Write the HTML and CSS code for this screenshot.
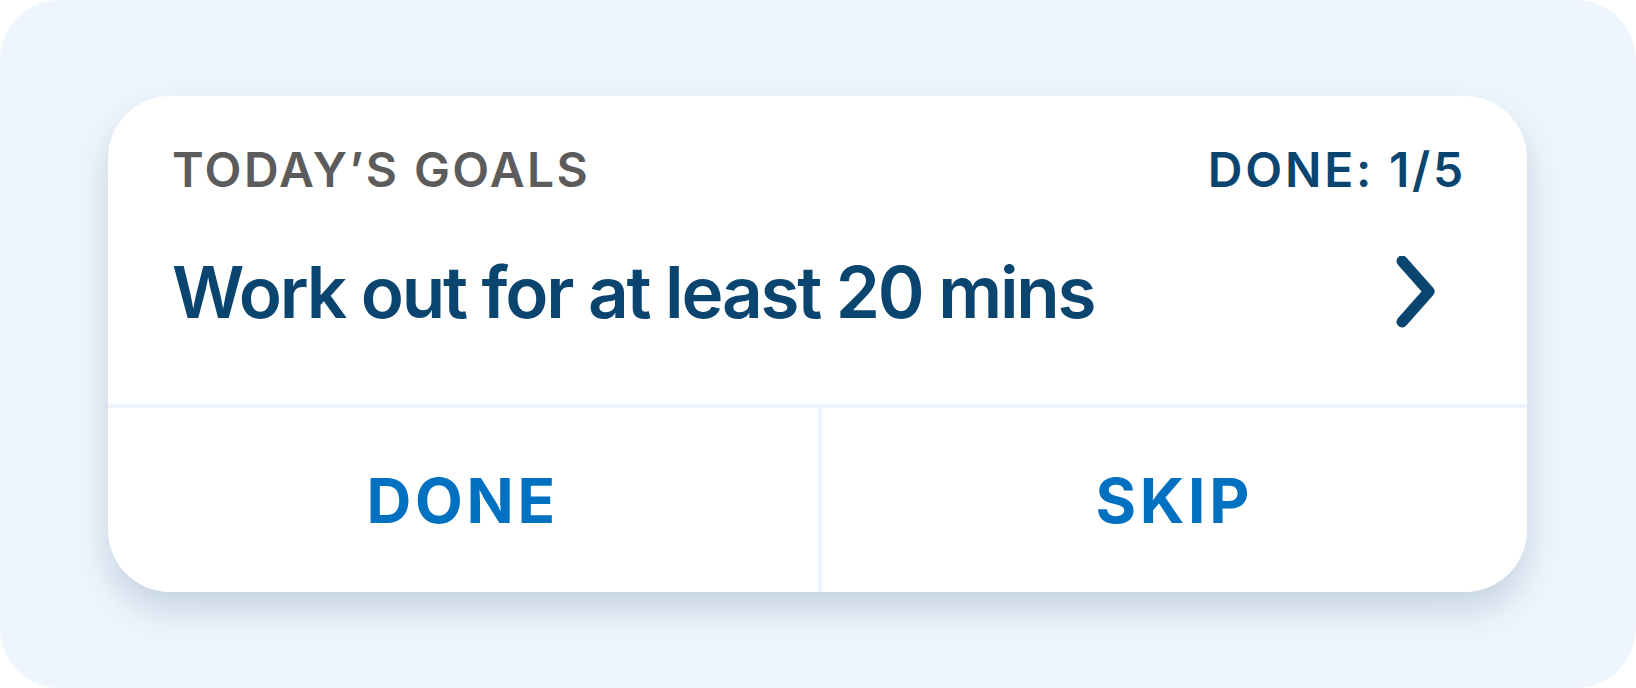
FILE: index.html
```html
<!DOCTYPE html>
<html lang="en">
<head>
<meta charset="utf-8">
<title>Today's Goals</title>
<link rel="stylesheet" href="styles.css">
</head>
<body>
<div class="frame">
  <div class="card">
    <div class="card-top">
      <div class="card-header">
        <span class="label">TODAY’S GOALS</span>
        <span class="count">DONE: 1/5</span>
      </div>
      <div class="goal-row">
        <span class="goal">Work out for at least 20 mins</span>
        <svg class="chevron" width="50" height="72" viewBox="0 0 50 72" aria-hidden="true">
          <path d="M12 5 L39 35.5 L12 66" fill="none" stroke="#0a4570" stroke-width="11" stroke-linecap="round" stroke-linejoin="round"/>
        </svg>
      </div>
    </div>
    <div class="actions">
      <button class="action action-done">DONE</button>
      <button class="action action-skip">SKIP</button>
    </div>
  </div>
</div>
</body>
</html>
```

FILE: styles.css
```css
* { box-sizing: border-box; }

html, body {
  margin: 0;
  padding: 0;
  background: #ffffff;
}

body {
  font-family: Inter, "Noto Sans", "Liberation Sans", sans-serif;
}

.frame {
  width: 1636px;
  height: 688px;
  background: #eef5fc;
  border-radius: 60px;
  padding: 96px 109px 96px 108px;
}

.card {
  height: 496px;
  background: #ffffff;
  border-radius: 62px;
  box-shadow: 0 18px 34px rgba(40, 80, 120, 0.2);
  display: flex;
  flex-direction: column;
  overflow: hidden;
}

.card-top {
  height: 312px;
  padding: 50px 64px 0 64px;
  border-bottom: 4px solid #eef3fa;
}

.card-header {
  display: flex;
  justify-content: space-between;
  align-items: center;
  height: 48px;
  line-height: 48px;
  font-size: 48px;
  font-weight: 600;
}

.label {
  color: #5c5c5c;
  letter-spacing: 0.05em;
}

.count {
  color: #0a4570;
  letter-spacing: 0.058em;
  margin-right: -3px;
}

.goal-row {
  display: flex;
  justify-content: space-between;
  align-items: center;
  height: 72px;
  margin-top: 62px;
}

.goal {
  color: #0a4570;
  font-size: 71px;
  line-height: 72px;
  font-weight: 600;
  letter-spacing: -0.031em;
}

.chevron {
  display: block;
  margin-right: 23px;
}

.actions {
  flex: 1;
  display: flex;
}

.action {
  border: 0;
  background: transparent;
  font-family: inherit;
  color: #0070c0;
  font-size: 62px;
  font-weight: 700;
  letter-spacing: 0.06em;
  padding: 0;
  cursor: pointer;
}

.action-done {
  flex: 0 0 50%;
}

.action-skip {
  flex: 1;
  border-left: 4px solid #eef3fa;
}
```
